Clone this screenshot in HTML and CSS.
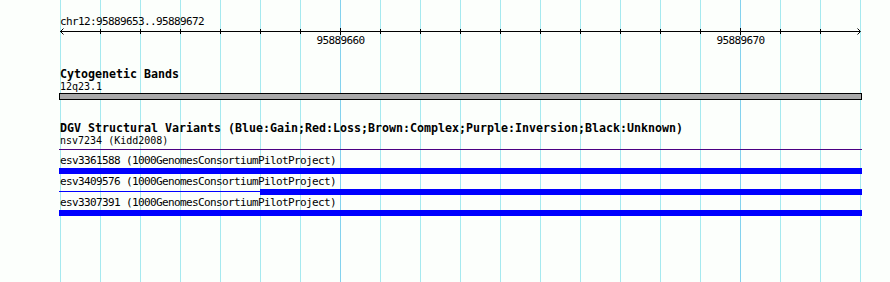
FILE: index.html
```html
<!DOCTYPE html>
<html lang="en">
<head>
    <meta charset="UTF-8">
    <title>chr12:95889653..95889672</title>
    <link rel="stylesheet" href="styles.css">
</head>
<body>
    <div class="panel">
        <div class="ruler">
            <div class="segment">chr12:95889653..95889672</div>
            <svg class="axis" width="803" height="18" viewBox="0 0 803 18">
                <path class="axis-line" d="M1 3.5H801"/>
                <path class="axis-line" d="M41.5 1V6M81.5 1V6M121.5 1V6M161.5 1V6M201.5 1V6M241.5 1V6M321.5 1V6M361.5 1V6M401.5 1V6M441.5 1V6M481.5 1V6M521.5 1V6M561.5 1V6M601.5 1V6M641.5 1V6M721.5 1V6M761.5 1V6"/>
                <path class="axis-line" d="M281.5 0V7M681.5 0V7"/>
                <path class="axis-line" d="M4.5 0.5L1.5 3.5L4.5 6.5M798.5 0.5L801.5 3.5L798.5 6.5"/>
                <text x="281.5" y="16">95889660</text>
                <text x="681.5" y="16">95889670</text>
            </svg>
        </div>

        <div class="track">
            <div class="track-title">Cytogenetic Bands</div>
            <div class="feature-name">12q23.1</div>
            <div class="band"></div>
        </div>

        <div class="track">
            <div class="track-title">DGV Structural Variants (Blue:Gain;Red:Loss;Brown:Complex;Purple:Inversion;Black:Unknown)</div>
            <div class="feature-name">nsv7234 (Kidd2008)</div>
            <div class="group-line"></div>

            <div class="rows">
                <div class="feature">
                    <div class="feature-label">esv3361588 (1000GenomesConsortiumPilotProject)</div>
                    <div class="glyph"><span class="block gain"></span></div>
                </div>
                <div class="feature">
                    <div class="feature-label">esv3409576 (1000GenomesConsortiumPilotProject)</div>
                    <div class="glyph"><span class="connector gain" style="width: 201px;"></span><span class="block gain"></span></div>
                </div>
                <div class="feature">
                    <div class="feature-label">esv3307391 (1000GenomesConsortiumPilotProject)</div>
                    <div class="glyph"><span class="block gain"></span></div>
                </div>
            </div>
        </div>
    </div>
</body>
</html>
```

FILE: styles.css
```css
* {
    margin: 0;
    padding: 0;
    box-sizing: border-box;
}

body {
    background: #fcfffc;
    color: #000000;
    font-family: 'DejaVu Sans Mono', monospace;
    font-size: 11px;
    letter-spacing: -0.62px;
}

/* grid: light line every base (40px), darker line every 10 bases */
.panel {
    width: 890px;
    height: 282px;
    padding: 0 28px 0 59px;
    background-image:
        linear-gradient(to right, #84d2ee 1px, transparent 1px),
        linear-gradient(to right, #a6e9ef 1px, transparent 1px);
    background-size: 400px 100%, 40px 100%;
    background-position: 281px 0, 1px 0;
    background-repeat: repeat-x;
    background-origin: content-box;
    background-clip: content-box;
}

.ruler {
    padding-top: 15px;
}

.segment {
    line-height: 13px;
    padding-left: 1px;
}

.axis {
    display: block;
}

.axis-line {
    fill: none;
    stroke: #000000;
    stroke-width: 1;
}

.axis text {
    font-family: 'DejaVu Sans Mono', monospace;
    font-size: 11px;
    letter-spacing: -0.62px;
    text-anchor: middle;
}

.track {
    margin-top: 22px;
}

.track-title {
    font-weight: bold;
    font-size: 11.63px;
    letter-spacing: 0;
    line-height: 12px;
    padding-left: 1px;
    white-space: nowrap;
}

.feature-name {
    font-size: 10px;
    letter-spacing: 0;
    line-height: 12px;
    padding: 1px 0 0 1px;
}

.band {
    height: 7px;
    background: #a9a9a9;
    border: 1px solid #000000;
}

.group-line {
    margin-top: 2px;
    height: 1px;
    background: #4b0082;
}

.rows {
    margin-top: 4px;
}

.feature-label {
    line-height: 13px;
    padding-left: 1px;
}

.glyph {
    display: flex;
    height: 6px;
    margin: 1px 0;
}

.block {
    flex: 1;
}

.connector {
    height: 1px;
    margin-top: 2px;
}

.gain {
    background: #0000ff;
}
```
